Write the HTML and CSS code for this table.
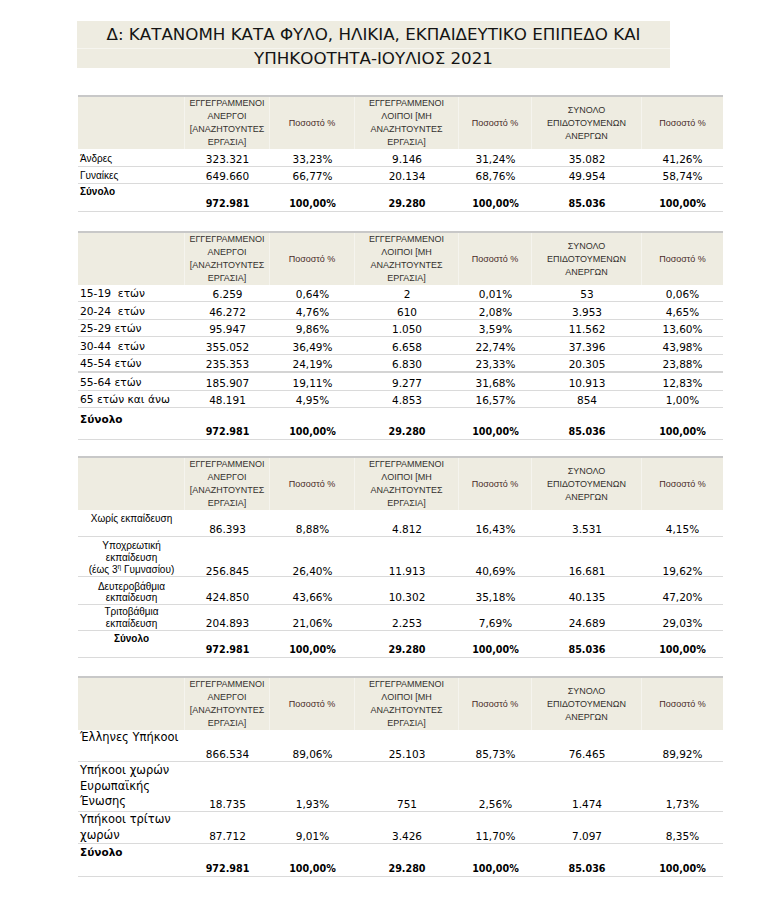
FILE: index.html
```html
<!DOCTYPE html>
<html lang="el">
<head>
<meta charset="utf-8">
<title>Κατανομή</title>
<link rel="stylesheet" href="styles.css">
</head>
<body>
<div class="sheet">
  <div class="title">
    <div class="title-line1">Δ: ΚΑΤΑΝΟΜΗ ΚΑΤΑ ΦΥΛΟ, ΗΛΙΚΙΑ, ΕΚΠΑΙΔΕΥΤΙΚΟ ΕΠΙΠΕΔΟ ΚΑΙ</div>
    <div class="title-line2">ΥΠΗΚΟΟΤΗΤΑ-ΙΟΥΛΙΟΣ 2021</div>
  </div>

  <table class="tbl t1">
    <colgroup><col class="c0"><col class="c1"><col class="c2"><col class="c3"><col class="c4"><col class="c5"><col class="c6"></colgroup>
    <thead><tr class="hd"><th></th><th>ΕΓΓΕΓΡΑΜΜΕΝΟΙ<br>ΑΝΕΡΓΟΙ<br>[ΑΝΑΖΗΤΟΥΝΤΕΣ<br>ΕΡΓΑΣΙΑ]</th><th class="pct">Ποσοστό %</th><th>ΕΓΓΕΓΡΑΜΜΕΝΟΙ<br>ΛΟΙΠΟΙ [ΜΗ<br>ΑΝΑΖΗΤΟΥΝΤΕΣ<br>ΕΡΓΑΣΙΑ]</th><th class="pct">Ποσοστό %</th><th>ΣΥΝΟΛΟ<br>ΕΠΙΔΟΤΟΥΜΕΝΩΝ<br>ΑΝΕΡΓΩΝ</th><th class="pct">Ποσοστό %</th></tr></thead>
    <tbody>
      <tr class="r18"><td class="lbl-s">Άνδρες</td><td>323.321</td><td>33,23%</td><td>9.146</td><td>31,24%</td><td>35.082</td><td>41,26%</td></tr>
      <tr class="r17"><td class="lbl-s">Γυναίκες</td><td>649.660</td><td>66,77%</td><td>20.134</td><td>68,76%</td><td>49.954</td><td>58,74%</td></tr>
      <tr class="tot t1-tot"><td class="lbl-s lbl-b">Σύνολο</td><td>972.981</td><td>100,00%</td><td>29.280</td><td>100,00%</td><td>85.036</td><td>100,00%</td></tr>
    </tbody>
  </table>

  <table class="tbl t2">
    <colgroup><col class="c0"><col class="c1"><col class="c2"><col class="c3"><col class="c4"><col class="c5"><col class="c6"></colgroup>
    <thead><tr class="hd"><th></th><th>ΕΓΓΕΓΡΑΜΜΕΝΟΙ<br>ΑΝΕΡΓΟΙ<br>[ΑΝΑΖΗΤΟΥΝΤΕΣ<br>ΕΡΓΑΣΙΑ]</th><th class="pct">Ποσοστό %</th><th>ΕΓΓΕΓΡΑΜΜΕΝΟΙ<br>ΛΟΙΠΟΙ [ΜΗ<br>ΑΝΑΖΗΤΟΥΝΤΕΣ<br>ΕΡΓΑΣΙΑ]</th><th class="pct">Ποσοστό %</th><th>ΣΥΝΟΛΟ<br>ΕΠΙΔΟΤΟΥΜΕΝΩΝ<br>ΑΝΕΡΓΩΝ</th><th class="pct">Ποσοστό %</th></tr></thead>
    <tbody>
      <tr class="r17"><td class="lbl-v">15-19&nbsp; ετών</td><td>6.259</td><td>0,64%</td><td>2</td><td>0,01%</td><td>53</td><td>0,06%</td></tr>
      <tr class="r18"><td class="lbl-v">20-24&nbsp; ετών</td><td>46.272</td><td>4,76%</td><td>610</td><td>2,08%</td><td>3.953</td><td>4,65%</td></tr>
      <tr class="r17"><td class="lbl-v">25-29 ετών</td><td>95.947</td><td>9,86%</td><td>1.050</td><td>3,59%</td><td>11.562</td><td>13,60%</td></tr>
      <tr class="r18"><td class="lbl-v">30-44&nbsp; ετών</td><td>355.052</td><td>36,49%</td><td>6.658</td><td>22,74%</td><td>37.396</td><td>43,98%</td></tr>
      <tr class="r17 thick"><td class="lbl-v">45-54 ετών</td><td>235.353</td><td>24,19%</td><td>6.830</td><td>23,33%</td><td>20.305</td><td>23,88%</td></tr>
      <tr class="r18"><td class="lbl-v">55-64 ετών</td><td>185.907</td><td>19,11%</td><td>9.277</td><td>31,68%</td><td>10.913</td><td>12,83%</td></tr>
      <tr class="r17"><td class="lbl-v">65 ετών και άνω</td><td>48.191</td><td>4,95%</td><td>4.853</td><td>16,57%</td><td>854</td><td>1,00%</td></tr>
      <tr class="tot t2-tot"><td class="lbl-v lbl-b">Σύνολο</td><td>972.981</td><td>100,00%</td><td>29.280</td><td>100,00%</td><td>85.036</td><td>100,00%</td></tr>
    </tbody>
  </table>

  <table class="tbl t3">
    <colgroup><col class="c0"><col class="c1"><col class="c2"><col class="c3"><col class="c4"><col class="c5"><col class="c6"></colgroup>
    <thead><tr class="hd hd3"><th></th><th>ΕΓΓΕΓΡΑΜΜΕΝΟΙ<br>ΑΝΕΡΓΟΙ<br>[ΑΝΑΖΗΤΟΥΝΤΕΣ<br>ΕΡΓΑΣΙΑ]</th><th class="pct">Ποσοστό %</th><th>ΕΓΓΕΓΡΑΜΜΕΝΟΙ<br>ΛΟΙΠΟΙ [ΜΗ<br>ΑΝΑΖΗΤΟΥΝΤΕΣ<br>ΕΡΓΑΣΙΑ]</th><th class="pct">Ποσοστό %</th><th>ΣΥΝΟΛΟ<br>ΕΠΙΔΟΤΟΥΜΕΝΩΝ<br>ΑΝΕΡΓΩΝ</th><th class="pct">Ποσοστό %</th></tr></thead>
    <tbody>
      <tr class="tot e1"><td class="lbl-c">Χωρίς εκπαίδευση</td><td>86.393</td><td>8,88%</td><td>4.812</td><td>16,43%</td><td>3.531</td><td>4,15%</td></tr>
      <tr class="tot e2"><td class="lbl-c">Υποχρεωτική<br>εκπαίδευση<br>(έως 3<sup>η</sup> Γυμνασίου)</td><td>256.845</td><td>26,40%</td><td>11.913</td><td>40,69%</td><td>16.681</td><td>19,62%</td></tr>
      <tr class="tot e3"><td class="lbl-c">Δευτεροβάθμια<br>εκπαίδευση</td><td>424.850</td><td>43,66%</td><td>10.302</td><td>35,18%</td><td>40.135</td><td>47,20%</td></tr>
      <tr class="tot e4"><td class="lbl-c">Τριτοβάθμια<br>εκπαίδευση</td><td>204.893</td><td>21,06%</td><td>2.253</td><td>7,69%</td><td>24.689</td><td>29,03%</td></tr>
      <tr class="tot e5"><td class="lbl-c lbl-b">Σύνολο</td><td>972.981</td><td>100,00%</td><td>29.280</td><td>100,00%</td><td>85.036</td><td>100,00%</td></tr>
    </tbody>
  </table>

  <table class="tbl t4">
    <colgroup><col class="c0"><col class="c1"><col class="c2"><col class="c3"><col class="c4"><col class="c5"><col class="c6"></colgroup>
    <thead><tr class="hd"><th></th><th>ΕΓΓΕΓΡΑΜΜΕΝΟΙ<br>ΑΝΕΡΓΟΙ<br>[ΑΝΑΖΗΤΟΥΝΤΕΣ<br>ΕΡΓΑΣΙΑ]</th><th class="pct">Ποσοστό %</th><th>ΕΓΓΕΓΡΑΜΜΕΝΟΙ<br>ΛΟΙΠΟΙ [ΜΗ<br>ΑΝΑΖΗΤΟΥΝΤΕΣ<br>ΕΡΓΑΣΙΑ]</th><th class="pct">Ποσοστό %</th><th>ΣΥΝΟΛΟ<br>ΕΠΙΔΟΤΟΥΜΕΝΩΝ<br>ΑΝΕΡΓΩΝ</th><th class="pct">Ποσοστό %</th></tr></thead>
    <tbody>
      <tr class="tot n1"><td class="lbl-l">Έλληνες Υπήκοοι</td><td>866.534</td><td>89,06%</td><td>25.103</td><td>85,73%</td><td>76.465</td><td>89,92%</td></tr>
      <tr class="tot n2"><td class="lbl-l">Υπήκοοι χωρών Ευρωπαϊκής Ένωσης</td><td>18.735</td><td>1,93%</td><td>751</td><td>2,56%</td><td>1.474</td><td>1,73%</td></tr>
      <tr class="tot n3"><td class="lbl-l">Υπήκοοι τρίτων χωρών</td><td>87.712</td><td>9,01%</td><td>3.426</td><td>11,70%</td><td>7.097</td><td>8,35%</td></tr>
      <tr class="tot n4"><td class="lbl-l lbl-b">Σύνολο</td><td>972.981</td><td>100,00%</td><td>29.280</td><td>100,00%</td><td>85.036</td><td>100,00%</td></tr>
    </tbody>
  </table>
</div>
</body>
</html>
```

FILE: styles.css
```css
html, body {
  margin: 0;
  padding: 0;
  background: #ffffff;
}

.sheet {
  padding: 21px 0 0 78px;
  color: #000;
  font-family: "DejaVu Sans", Verdana, sans-serif;
}

.title {
  width: 593px;
  margin-left: -1px;
  background: #eeece1;
  color: #141414;
  font-family: "DejaVu Sans", sans-serif;
  font-size: 16.7px;
  text-align: center;
}

.title-line1 {
  height: 27px;
  line-height: 27px;
}

.title-line2 {
  height: 19px;
  line-height: 19px;
  border-top: 1px solid #f6f5ef;
}

.tbl {
  border-collapse: separate;
  border-spacing: 0;
  table-layout: fixed;
  width: 645px;
  border-top: 2px solid #c8c8c8;
}

.t1 { margin-top: 27px; }
.t2 { margin-top: 19px; }
.t3 { margin-top: 16px; }
.t4 { margin-top: 18px; }

.c0 { width: 107px; }
.c1 { width: 85px; }
.c2 { width: 85px; }
.c3 { width: 104px; }
.c4 { width: 73px; }
.c5 { width: 110px; }
.c6 { width: 81px; }

.hd { height: 52px; }

.tbl th {
  background: #eeece1;
  font-family: "Liberation Sans", Arial, sans-serif;
  font-size: 9px;
  line-height: 13px;
  font-weight: normal;
  color: #34322e;
  text-align: center;
  vertical-align: middle;
  padding: 0;
  border-right: 1px solid #f5f4ee;
}

.tbl th:last-child { border-right: none; }

.tbl th.pct { color: #4a2c29; }

.tbl td {
  padding: 0;
  border-bottom: 1px solid #dadada;
  text-align: center;
  vertical-align: middle;
  font-family: "DejaVu Sans", Verdana, sans-serif;
  font-size: 10.5px;
  line-height: 14px;
  white-space: nowrap;
}

.r17 { height: 17px; }
.r18 { height: 18px; }

.r17 td, .r18 td { padding-top: 2px; }

.thick td { border-bottom: 2px solid #d4d4d4; }

.tot td { vertical-align: bottom; }

.tot td.lbl-s,
.tot td.lbl-v,
.tot td.lbl-c,
.tot td.lbl-l { vertical-align: top; }

.n4 td, .t1-tot td, .t2-tot td, .e5 td {
  font-weight: bold;
  font-size: 9.6px;
}

.tbl td.lbl-s {
  text-align: left;
  padding-left: 2px;
  font-family: "Liberation Sans", Arial, sans-serif;
  font-size: 10px;
  line-height: 12px;
}

.tbl td.lbl-v {
  text-align: left;
  padding-left: 2px;
  font-size: 10.7px;
  line-height: 14px;
}

.tbl td.lbl-c {
  text-align: center;
  font-family: "Liberation Sans", Arial, sans-serif;
  font-size: 10px;
  line-height: 12px;
  padding-top: 3px;
  white-space: normal;
}

.tbl td.lbl-c sup {
  font-size: 6.5px;
  line-height: 0;
  vertical-align: 4px;
}

.tbl td.lbl-l {
  text-align: left;
  padding-left: 2px;
  padding-top: 0;
  font-size: 11.5px;
  line-height: 15.5px;
  white-space: normal;
}

.tbl td.lbl-b { font-weight: bold; }

.t1-tot { height: 28px; }
.t1-tot td.lbl-s { font-size: 10px; padding-top: 2px; }

.t2-tot { height: 32px; }
.t2-tot td.lbl-v { font-size: 10.5px; padding-top: 4px; }

.e1 { height: 27px; }
.e2 { height: 38px; }
.e2 td { line-height: 10px; }
.e2 td.lbl-c { line-height: 12px; }
.e3 { height: 28px; }
.e3 td.lbl-c { padding-top: 4px; line-height: 11px; }
.e4 { height: 26px; }
.e4 td.lbl-c { padding-top: 1px; }
.e5 { height: 27px; }
.e5 td.lbl-c { padding-top: 2px; font-size: 10px; }

.n1 { height: 32px; }
.n2 { height: 50px; }
.n2 td.lbl-l { padding-top: 1px; }
.n3 { height: 32px; }
.n3 td.lbl-l { padding-top: 0; }
.n4 { height: 33px; }
.n4 td.lbl-l { font-size: 10.5px; padding-top: 1px; }
```
